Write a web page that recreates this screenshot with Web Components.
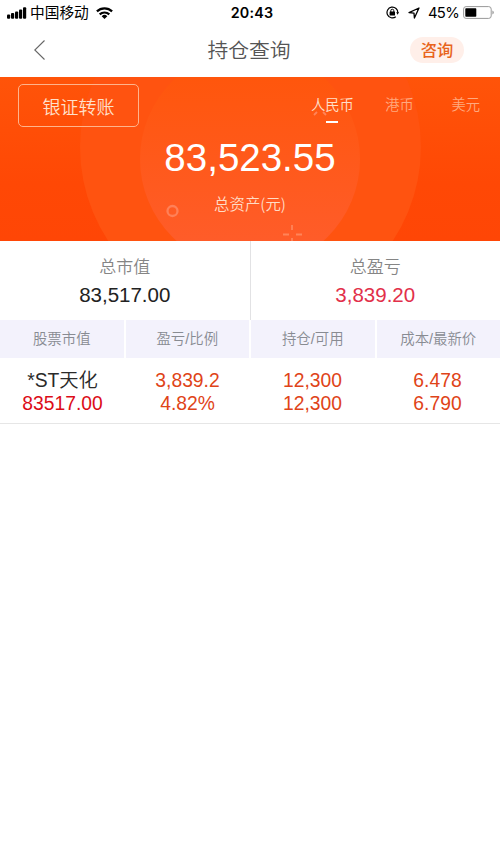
<!DOCTYPE html>
<html lang="zh-CN">
<head>
<meta charset="utf-8">
<title>持仓查询</title>
<style>
    body {
        margin: 0;
        background: #fff;
        font-family: "Liberation Sans", "Noto Sans CJK SC", sans-serif;
        color: #222;
    }
</style>
</head>
<body>
<position-page></position-page>

<script>
class StatusBar extends HTMLElement {

    constructor() {
        super();
        this.attachShadow({mode: "open"}).innerHTML = `
        <style>
            :host {
                display: grid;
                grid-template-columns: 1fr auto 1fr;
                align-items: center;
                height: 25px;
                padding: 0 6px 0 7px;
                box-sizing: border-box;
                color: #000;
                font-family: Inter, "Noto Sans CJK SC", sans-serif;
                font-size: 14.7px;
                line-height: 25px;
            }
            div { display: flex; align-items: center; height: 25px; }
            svg { display: block; }
            .carrier { margin: 2px 7px 0 3px; }
            .time { margin-left: 3px; font-size: 14.3px; font-weight: 600; letter-spacing: .2px; }
            .right { justify-content: flex-end; }
            .arrow { margin: 0 8px 0 9px; }
            .level { margin: 2px 4px 0 0; font-size: 14.8px; letter-spacing: -.7px; }
        </style>
        <div>
            <svg width="20" height="12" viewBox="0 0 20 12">
                <rect x="0" y="7.5" width="3.2" height="4.2" rx="1"/>
                <rect x="4" y="6" width="3.2" height="5.7" rx="1"/>
                <rect x="8" y="4.5" width="3.2" height="7.2" rx="1"/>
                <rect x="12" y="2.5" width="3.2" height="9.2" rx="1"/>
                <rect x="16" y=".3" width="3.2" height="11.4" rx="1"/>
            </svg>
            <span class="carrier">中国移动</span>
            <svg width="17" height="12" viewBox="0 0 17 12" fill="none" stroke="#000" stroke-width="2.2">
                <path d="M.9 4.4a11 11 0 0 1 15.2 0M3.7 7.4a7 7 0 0 1 9.6 0"/>
                <path d="M8.5 12L5.7 9.2a4 4 0 0 1 5.6 0z" fill="#000" stroke="none"/>
            </svg>
        </div>
        <span class="time">20:43</span>
        <div class="right">
            <svg width="13" height="13" viewBox="0 0 13 13" fill="none" stroke="#000">
                <path d="M9.8 10.7A5.4 5.4 0 1 1 11.8 6.9" stroke-width="1.2"/>
                <path d="M10.2 6.3h2.8l-1.4 2.5z" fill="#000" stroke="none"/>
                <rect x="3.6" y="5.5" width="5.4" height="4.1" rx=".4" fill="#000" stroke="none"/>
                <path d="M4.8 6V4.7a1.5 1.5 0 0 1 3 0V6"/>
            </svg>
            <svg class="arrow" width="12" height="12" viewBox="0 0 12 12" fill="none" stroke="#000" stroke-width="1.3" stroke-linejoin="round">
                <path d="M11 1L1 5.6l5 .5.4 4.9z"/>
            </svg>
            <span class="level">45%</span>
            <svg width="31" height="13" viewBox="0 0 31 13">
                <rect x=".6" y=".6" width="27.6" height="11.8" rx="2.5" fill="none" stroke="#999"/>
                <rect x="2.3" y="2.3" width="11" height="8.4" rx=".7"/>
                <path d="M29.4 4.5q1.4.7 1.4 2t-1.4 2z" fill="#999"/>
            </svg>
        </div>
        `;
    }
}

class NavHeader extends HTMLElement {

    constructor() {
        super();
        this.attachShadow({mode: "open"}).innerHTML = `
        <style>
            :host {
                display: grid;
                grid-template-columns: 1fr auto 1fr;
                align-items: center;
                height: 52px;
                padding: 0 36px 0 34px;
                box-sizing: border-box;
            }
            svg { display: block; margin-top: -2px; }
            h1 {
                margin: 0;
                font-size: 20.8px;
                font-weight: 350;
                line-height: 30px;
                color: #555;
            }
            .ask {
                justify-self: end;
                width: 54px;
                height: 26px;
                margin-top: -2px;
                border-radius: 13px;
                background: #ffefe9;
                color: #e8641b;
                font-size: 16.3px;
                font-weight: 500;
                line-height: 27px;
                text-align: center;
            }
        </style>
        <svg width="12" height="20" viewBox="0 0 12 20" fill="none" stroke="#666" stroke-width="1.1">
            <path d="M10.5 .5L.8 10l9.7 9.5"/>
        </svg>
        <h1><slot></slot></h1>
        <span class="ask"><slot name="action"></slot></span>
        `;
    }
}

class CurrencyTab extends HTMLElement {

    constructor() {
        super();
        this.attachShadow({mode: "open"}).innerHTML = `
        <style>
            :host {
                display: flex;
                flex-direction: column;
                align-items: center;
                color: #ffa97f;
                font-size: 14.3px;
                font-weight: 350;
                line-height: 20px;
            }
            :host([active]) { color: #ffe0cb; }
            :host([active])::after {
                content: "";
                width: 12px;
                height: 2.5px;
                margin-top: 5.5px;
                background: #fff;
            }
        </style>
        <slot></slot>
        `;
    }
}

class AssetHero extends HTMLElement {

    constructor() {
        super();
        this.attachShadow({mode: "open"}).innerHTML = `
        <style>
            :host {
                display: block;
                position: relative;
                height: 164px;
                overflow: hidden;
                background: linear-gradient(#ff5409, #ff4805 65%, #ff4606);
                text-align: center;
            }
            .deco { position: absolute; top: 0; left: 0; }
            .content { position: relative; }
            .top {
                display: flex;
                justify-content: space-between;
                padding: 7px 20px 0 18px;
            }
            .transfer {
                width: 121px;
                height: 43px;
                box-sizing: border-box;
                border: 1.5px solid #ffb48c;
                border-radius: 5px;
                color: #ffe0cb;
                font-size: 18px;
                font-weight: 350;
                line-height: 46px;
            }
            .tabs { display: flex; gap: 31.5px; padding-top: 11px; }
            .tabs slot { display: contents; }
            .total {
                margin-top: 9px;
                color: #fff;
                font-size: 38.5px;
                line-height: 44px;
            }
            .label {
                margin-top: 12px;
                color: #ffdcc6;
                font-family: "Noto Sans CJK SC", sans-serif;
                font-size: 15.4px;
                font-weight: 350;
                line-height: 22px;
            }
        </style>
        <svg class="deco" width="500" height="164" viewBox="0 0 500 164" fill="none">
            <defs>
                <linearGradient id="glow" x1="0" y1="0" x2="0" y2="164" gradientUnits="userSpaceOnUse">
                    <stop offset="0" stop-color="#ff560c"/>
                    <stop offset="1" stop-color="#ff5c29"/>
                </linearGradient>
            </defs>
            <circle cx="250.5" cy="70" r="170.5" fill="#ff5310"/>
            <circle cx="250" cy="82" r="110" fill="url(#glow)"/>
            <circle cx="172.5" cy="134" r="5" stroke="#ff8058" stroke-width="2.3"/>
            <g stroke="#ff8459" stroke-width="1.8">
                <path d="M292 148v5M283 157.5h6M296 157.5h6M292 161v3"/>
                <path d="M314 38l3-3M323 35l3 3"/>
            </g>
        </svg>
        <div class="content">
            <div class="top">
                <div class="transfer"><slot name="transfer"></slot></div>
                <div class="tabs"><slot name="tab"></slot></div>
            </div>
            <div class="total"><slot name="total"></slot></div>
            <div class="label"><slot name="label"></slot></div>
        </div>
        `;
    }
}

class SummaryCell extends HTMLElement {

    constructor() {
        super();
        this.attachShadow({mode: "open"}).innerHTML = `
        <style>
            :host {
                display: block;
                flex: 1;
                height: 79px;
                padding-top: 15px;
                box-sizing: border-box;
                text-align: center;
            }
            :host(:not(:first-child)) { border-left: 1px solid #e2e2e4; }
            .label {
                color: #858585;
                font-size: 17px;
                font-weight: 350;
                line-height: 24px;
            }
            .value {
                margin-top: 3px;
                font-size: 20.5px;
                line-height: 24px;
            }
            :host([rise]) .value { color: #e2304a; }
        </style>
        <div class="label">${this.getAttribute("label")}</div>
        <div class="value"><slot></slot></div>
        `;
    }
}

class HoldingTable extends HTMLElement {

    constructor() {
        super();
        this.attachShadow({mode: "open"}).innerHTML = `
        <style>
            :host { display: block; text-align: center; }
            .head, .row {
                display: grid;
                grid-template-columns: repeat(4, 1fr);
            }
            .head {
                column-gap: 2px;
                color: #888b92;
                font-size: 14.4px;
                font-weight: 350;
                line-height: 39px;
            }
            .head span { height: 38px; background: #f3f2fc; }
            .row {
                height: 66px;
                padding-top: 11px;
                box-sizing: border-box;
                border-bottom: 1.5px solid #e6e6e6;
                color: #df4418;
                font-size: 19.3px;
                line-height: 23px;
            }
            .row div { display: grid; grid-template-rows: 23px 23px; }
            .name { color: #2a2a2a; font-weight: 350; }
            .worth { color: #dc0c18; }
        </style>
        <div class="head">
            <span>股票市值</span><span>盈亏/比例</span><span>持仓/可用</span><span>成本/最新价</span>
        </div>
        <div class="row">
            <div><span class="name">*ST天化</span><span class="worth">83517.00</span></div>
            <div><span>3,839.2</span><span>4.82%</span></div>
            <div><span>12,300</span><span>12,300</span></div>
            <div><span>6.478</span><span>6.790</span></div>
        </div>
        `;
    }
}

class PositionPage extends HTMLElement {

    constructor() {
        super();
        this.attachShadow({mode: "open"}).innerHTML = `
        <style>
            :host { display: block; width: 500px; height: 868px; overflow: hidden; }
            .summary { display: flex; }
        </style>
        <status-bar></status-bar>
        <nav-header>持仓查询<span slot="action">咨询</span></nav-header>
        <asset-hero>
            <span slot="transfer">银证转账</span>
            <currency-tab slot="tab" active>人民币</currency-tab>
            <currency-tab slot="tab">港币</currency-tab>
            <currency-tab slot="tab" style="margin-left: 6px">美元</currency-tab>
            <span slot="total">83,523.55</span>
            <span slot="label">总资产(元)</span>
        </asset-hero>
        <div class="summary">
            <summary-cell label="总市值">83,517.00</summary-cell>
            <summary-cell label="总盈亏" rise>3,839.20</summary-cell>
        </div>
        <holding-table></holding-table>
        `;
    }
}

customElements.define('status-bar', StatusBar);
customElements.define('nav-header', NavHeader);
customElements.define('currency-tab', CurrencyTab);
customElements.define('asset-hero', AssetHero);
customElements.define('summary-cell', SummaryCell);
customElements.define('holding-table', HoldingTable);
customElements.define('position-page', PositionPage);
</script>
</body>
</html>
